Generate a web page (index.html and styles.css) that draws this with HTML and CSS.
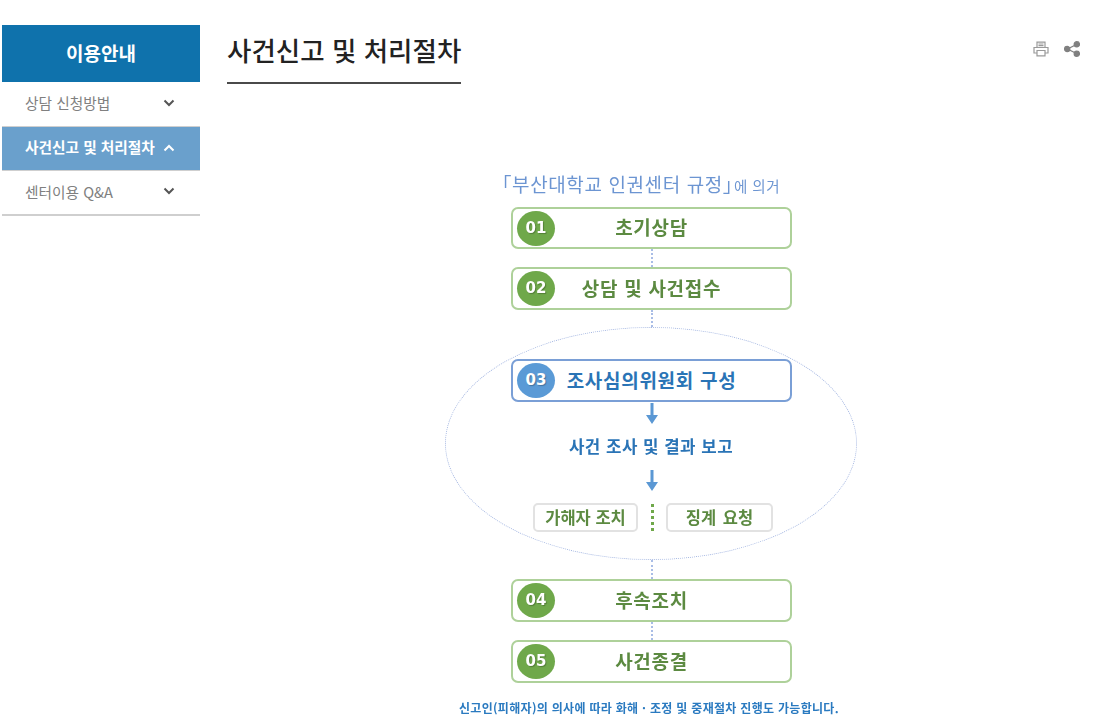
FILE: index.html
```html
<!DOCTYPE html>
<html lang="ko">
  <head>
    <meta charset="UTF-8" />
    <meta name="viewport" content="width=device-width, initial-scale=1.0" />
    <title>사건신고 및 처리절차</title>
    <link rel="stylesheet" href="styles.css">
  </head>
  <body>
    <div class="wrap">
      <aside class="side">
        <h2 class="side-title">이용안내</h2>
        <ul class="side-menu">
          <li class="side-item">
            <span>상담 신청방법</span>
            <svg class="chev" viewBox="0 0 12 8"><path d="M1.5 1.5 6 6l4.500-4.500" /></svg>
          </li>
          <li class="side-item active">
            <span>사건신고 및 처리절차</span>
            <svg class="chev" viewBox="0 0 12 8"><path d="M1.500 6.500 6 2l4.500 4.500" /></svg>
          </li>
          <li class="side-item last">
            <span>센터이용 Q&amp;A</span>
            <svg class="chev" viewBox="0 0 12 8"><path d="M1.5 1.5 6 6l4.500-4.500" /></svg>
          </li>
        </ul>
      </aside>
      <main class="main">
        <div class="page-head">
          <h1 class="page-title">사건신고 및 처리절차</h1>
          <div class="tools">
            <svg class="tool" viewBox="0 0 16 16" fill="none" stroke="#9a9a9a" stroke-width="1.200">
              <path d="M4 6V1.200h8V6" />
              <path d="M5.500 3h5M5.500 4.600h5" />
              <path d="M4 12H1V6.500h14V12h-3" />
              <path d="M4 9.500h8v5.300H4z" />
            </svg>
            <svg class="tool" viewBox="0 0 16 16" fill="#808080" stroke="#808080" stroke-width="1.300">
              <path d="M12.500 3.500 3.500 8l9 4.500" fill="none" />
              <circle cx="12.800" cy="3.300" r="2.600" />
              <circle cx="3.200" cy="8" r="2.600" />
              <circle cx="12.800" cy="12.700" r="2.600" />
            </svg>
          </div>
        </div>

        <div class="chart">
          <p class="lead">「부산대학교 인권센터 규정」<small>에 의거</small></p>
          <div class="step first"><b class="num">01</b><span>초기상담</span></div>
          <div class="link"></div>
          <div class="step"><b class="num">02</b><span>상담 및 사건접수</span></div>
          <div class="link short"></div>
          <div class="oval">
            <div class="step blue"><b class="num">03</b><span>조사심의위원회 구성</span></div>
            <svg class="arrow" viewBox="0 0 14 22"><path d="M5.500 0h3v12H13l-6 9-6-9h4.500z" /></svg>
            <p class="oval-text">사건 조사 및 결과 보고</p>
            <svg class="arrow" viewBox="0 0 14 22"><path d="M5.500 0h3v12H13l-6 9-6-9h4.500z" /></svg>
            <div class="actions">
              <span class="action">가해자 조치</span>
              <i class="dots"></i>
              <span class="action">징계 요청</span>
            </div>
          </div>
          <div class="link long"></div>
          <div class="step"><b class="num">04</b><span>후속조치</span></div>
          <div class="link"></div>
          <div class="step"><b class="num">05</b><span>사건종결</span></div>
          <p class="note">신고인(피해자)의 의사에 따라 화해 · 조정 및 중재절차 진행도 가능합니다.</p>
        </div>
      </main>
    </div>
  </body>
</html>
```

FILE: styles.css
```css
* {
  box-sizing: border-box;
}

body {
  font-family: "Noto Sans CJK KR", "Noto Sans", sans-serif;
  background-color: #fff;
  margin: 0;
  height: 724px;
  overflow: hidden;
}

.wrap {
  display: flex;
  padding: 25px 25px 0 2px;
}

/* left menu */
.side {
  width: 198px;
  flex-shrink: 0;
}

.side-title {
  height: 57px;
  margin: 0;
  background-color: #0f72ac;
  color: #fff;
  font-size: 19px;
  font-weight: 700;
  line-height: 56px;
  text-align: center;
}

.side-menu {
  list-style: none;
  margin: 0;
  padding: 0;
}

.side-item {
  display: flex;
  justify-content: space-between;
  align-items: center;
  height: 45px;
  padding: 0 25px 4px 23px;
  border-bottom: 1px solid #cfcfcf;
  color: #808080;
  font-size: 14.700px;
}

.side-item.active {
  height: 44px;
  background-color: #6aa0cc;
  color: #fff;
  font-weight: 700;
}

.side-item.last {
  height: 45px;
  padding-bottom: 3px;
  border-bottom-width: 2px;
}

.chev {
  width: 12px;
  height: 8px;
  margin-top: 2px;
  fill: none;
  stroke: #555;
  stroke-width: 2;
}

.active .chev {
  stroke: #fff;
}

.last .chev {
  margin-top: 0;
}

/* title */
.main {
  flex: 1;
  margin-left: 27px;
}

.page-head {
  display: flex;
  justify-content: space-between;
}

.page-title {
  margin: 0;
  height: 59px;
  border-bottom: 2px solid #4a4a4a;
  color: #222;
  font-size: 26.500px;
  font-weight: 500;
  line-height: 49px;
}

.tools {
  display: flex;
  gap: 15px;
  padding-top: 16px;
}

.tool {
  width: 16px;
  height: 16px;
}

/* flow chart */
.chart {
  width: 412px;
  margin: 0 0 0 218px;
  padding-top: 86px;
  filter: blur(0.35px);
}

.lead {
  margin: 0 0 9px 57px;
  width: 340px;
  height: 28px;
  color: #6c95d2;
  font-size: 19px;
  font-feature-settings: "halt";
  letter-spacing: 0.6px;
  line-height: 28px;
  white-space: nowrap;
}

.lead small {
  margin-left: 1px;
  font-size: 14.500px;
  letter-spacing: 0.5px;
}

.step {
  display: grid;
  grid-template-columns: 44px 1fr 44px;
  align-items: center;
  width: 281px;
  height: 43px;
  margin-left: 66px;
  background-color: #fff;
  border: 2px solid #aed19a;
  border-radius: 7px;
  color: #5c8a41;
  font-size: 19px;
  font-weight: 700;
  letter-spacing: 0.7px;
  line-height: 34px;
  text-align: center;
}

.step.first {
  height: 42px;
}

.step span {
  margin-top: -2px;
  white-space: nowrap;
}

.num {
  display: block;
  width: 38px;
  height: 35px;
  margin-left: 4px;
  border-radius: 50%;
  background-color: #6fa84a;
  color: #fff;
  font-family: "DejaVu Sans", sans-serif;
  font-size: 15px;
  line-height: 34px;
  letter-spacing: 0;
  text-shadow: 1px 1px 1px rgba(0, 0, 0, 0.25);
}

.step.blue {
  position: relative;
  border-color: #7a9fd6;
  color: #2a74b6;
}

.blue .num {
  background-color: #5a9ad6;
}

.link {
  width: 0;
  height: 18px;
  margin-left: 206px;
  border-left: 2px dotted #a9bde6;
}

.link.short {
  height: 17px;
}

.link.long {
  height: 19px;
}

.oval {
  position: relative;
  height: 233px;
  padding-top: 32px;
}

/* ellipse lies behind the group */
.oval::before {
  content: "";
  position: absolute;
  inset: 0;
  border: 1px dotted #a6b8e2;
  border-radius: 50%;
}

.arrow {
  display: block;
  position: relative;
  width: 14px;
  height: 22px;
  margin: 1px 0 0 200px;
  fill: #5b98d4;
}

.oval-text {
  position: relative;
  margin: 0;
  height: 44px;
  color: #2a74b6;
  font-size: 16.800px;
  font-weight: 700;
  line-height: 42px;
  letter-spacing: 0.5px;
  text-align: center;
}

.actions {
  position: relative;
  display: flex;
  align-items: center;
  height: 29px;
  margin: 11px 0 0 88px;
}

.action {
  width: 105px;
  height: 29px;
  border: 2px solid #e2e2e2;
  border-radius: 5px;
  background-color: #fff;
  color: #5c8a41;
  font-size: 16.500px;
  font-weight: 700;
  line-height: 24px;
  text-align: center;
}

.action:last-child {
  width: 107px;
  word-spacing: 2px;
}

.dots {
  width: 3px;
  height: 27px;
  margin: 0 12px 0 13px;
  border-left: 3px dotted #6fa84a;
}

.note {
  margin: 15px 0 0 14px;
  width: 400px;
  height: 20px;
  color: #2a7ac0;
  font-size: 12px;
  font-weight: 700;
  line-height: 20px;
  letter-spacing: 0.3px;
  white-space: nowrap;
}
```
